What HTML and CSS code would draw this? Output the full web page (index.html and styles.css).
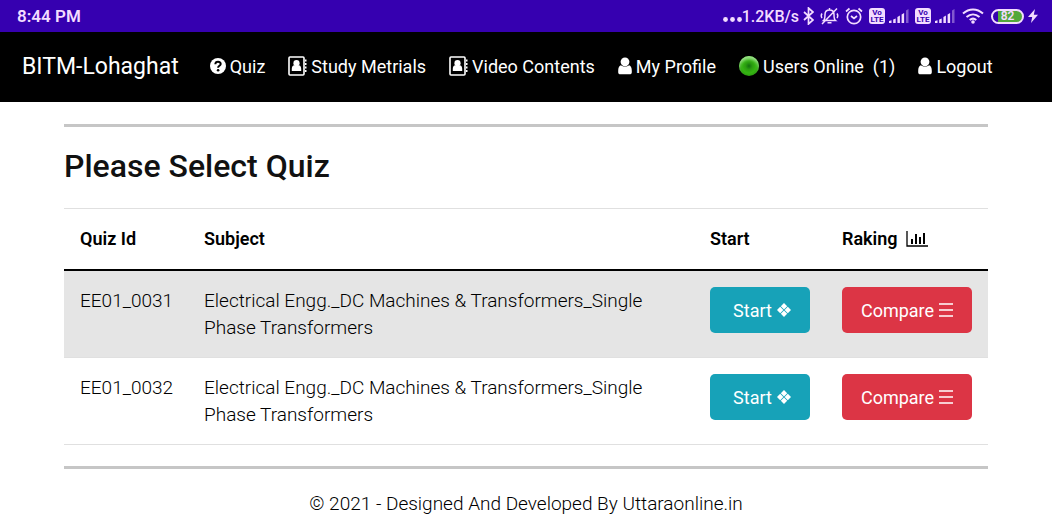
FILE: index.html
```
<!DOCTYPE html>
<html lang="en">

<head>
    <meta charset="UTF-8">
    <meta name="viewport" content="width=device-width, initial-scale=1.0">
    <title>BITM-Lohaghat - Quiz</title>
    <link rel="stylesheet" href="styles.css">
</head>

<body>
    <!-- Shared icons -->
    <svg class="icon-defs" width="0" height="0" aria-hidden="true">
        <symbol id="book" viewBox="0 0 19 20">
            <rect x="1" y="1" width="15" height="18" rx="1" fill="none" stroke="currentColor" stroke-width="1.6"/>
            <path d="M17 4.5h1.5M17 8h1.5M17 11.5h1.5M17 15h1.5" stroke="currentColor" stroke-width="2"/>
            <circle cx="8.5" cy="7.2" r="3.1" fill="currentColor"/>
            <path d="M3.800 15v-2.200c0-2 1-3.400 2.400-3.600c1.300 1 3.300 1 4.600 0c1.400.2 2.400 1.600 2.400 3.600V15z" fill="currentColor"/>
        </symbol>
        <symbol id="user" viewBox="0 0 14 18">
            <circle cx="7" cy="4.800" r="4.400" fill="currentColor"/>
            <path d="M2.800 8.200C1 8.700.2 10.800.2 14v1.200C.2 16.600 1 17.300 2.300 17.300h9.400c1.300 0 2.100-.7 2.100-2.100V14c0-3.200-.8-5.300-2.600-5.800c-2.400 1.800-6 1.800-8.400 0z" fill="currentColor"/>
        </symbol>
        <symbol id="signal" viewBox="0 0 20 14">
            <path d="M0 14v-2l2.500-.8V14zM4.200 14v-3.400L6.700 9.600V14zM8.400 14V8l2.500-1.400V14z" fill="currentColor"/>
            <path d="M12.600 14V5.500L15.100 4v10z" fill="currentColor"/>
            <path d="M17 14V1.500L19.500 0v14z" fill="currentColor" opacity=".4"/>
        </symbol>
        <symbol id="four" viewBox="0 0 14 14">
            <path d="M7 0l3.200 3.200L7 6.400L3.800 3.200zM7 7.600l3.200 3.200L7 14l-3.200-3.200zM3.200 3.800L6.400 7l-3.200 3.200L0 7zM10.800 3.800L14 7l-3.200 3.200L7.600 7z" fill="currentColor"/>
        </symbol>
        <symbol id="bars" viewBox="0 0 14 14">
            <path d="M0 1h14M0 7h14M0 13h14" stroke="currentColor" stroke-width="1.5"/>
        </symbol>
    </svg>

    <!-- Phone status bar -->
    <div class="status-bar">
        <span>8:44 PM</span>
        <div class="status-icons">
            <div class="speed">
                <svg width="19" height="5" viewBox="0 0 19 5"><g fill="currentColor"><circle cx="2.500" cy="2.500" r="2.400"/><circle cx="9.500" cy="2.500" r="2.400"/><circle cx="16.500" cy="2.500" r="2.400"/></g></svg>
                <span>1.2KB/s</span>
            </div>
            <svg width="11" height="18" viewBox="0 0 11 18"><path d="M1 5l9 8l-4.500 4V1L10 5l-9 8" fill="none" stroke="currentColor" stroke-width="1.700"/></svg>
            <svg class="bell" width="19" height="18" viewBox="0 0 19 18"><path d="M3.500 13.500h12c-1.500-1.200-1.500-3-1.500-6c0-2.800-1.700-4.500-4.500-4.500S5 4.700 5 7.500c0 3 0 4.800-1.500 6zM9.500 3V1M7.500 15.800h4M2 17L17 1.500M2 6.500c-1 1.500-1 3 0 4.500M17 6.500c1 1.500 1 3 0 4.500" fill="none" stroke="currentColor" stroke-width="1.500"/></svg>
            <svg class="alarm" width="18" height="18" viewBox="0 0 18 18"><circle cx="9" cy="10" r="6.700" fill="none" stroke="currentColor" stroke-width="1.700"/><path d="M1 4.500L4.500 1.500M17 4.500L13.500 1.500M6 9l3 2.500L12 9" fill="none" stroke="currentColor" stroke-width="1.700"/></svg>
            <span class="volte"><span>Vo</span><span>LTE</span></span>
            <svg class="signal" width="20" height="14"><use href="#signal"/></svg>
            <span class="volte"><span>Vo</span><span>LTE</span></span>
            <svg class="signal" width="20" height="14"><use href="#signal"/></svg>
            <svg class="wifi" width="22" height="16" viewBox="0 0 22 16"><g fill="none" stroke="currentColor" stroke-width="2"><path d="M1 5.500c6-5.400 14-5.400 20 0M4.500 9c4-3.500 9-3.500 13 0M7.700 12c2.200-1.800 4.400-1.800 6.600 0"/></g><circle cx="11" cy="14" r="1.800" fill="currentColor"/></svg>
            <span class="battery"><span>82</span></span>
            <svg width="10" height="14" viewBox="0 0 10 14"><path d="M7 0L0 8h4.200L3 14l7-8.200H5.800z" fill="currentColor"/></svg>
        </div>
    </div>

    <!-- Navbar -->
    <nav class="navbar">
        <a class="brand" href="#">BITM-Lohaghat</a>
        <a class="nav-link" href="#">
            <svg width="16" height="16" viewBox="0 0 16 16"><circle cx="8" cy="8" r="8" fill="currentColor"/><path d="M5.300 6.200c.2-3.200 5.400-3.100 5.400-.2c0 1.800-2.600 1.700-2.600 3.700" fill="none" stroke="#000" stroke-width="2"/><circle cx="8.100" cy="12.200" r="1.300" fill="#000"/></svg>
            Quiz
        </a>
        <a class="nav-link" href="#"><svg width="19" height="20"><use href="#book"/></svg>Study Metrials</a>
        <a class="nav-link" href="#"><svg width="19" height="20"><use href="#book"/></svg>Video Contents</a>
        <a class="nav-link" href="#"><svg width="14" height="18"><use href="#user"/></svg>My Profile</a>
        <a class="nav-link" href="#"><span class="online-dot"></span>Users Online&nbsp; (1)</a>
        <a class="nav-link" href="#"><svg width="14" height="18"><use href="#user"/></svg>Logout</a>
    </nav>

    <main class="container">
        <hr>
        <h1>Please Select Quiz</h1>

        <table class="quiz-table">
            <thead>
                <tr>
                    <th class="col-id">Quiz Id</th>
                    <th>Subject</th>
                    <th class="col-start">Start</th>
                    <th class="col-rank">Raking
                        <svg class="chart" width="22" height="16" viewBox="0 0 22 16"><path d="M1 0v15h21" fill="none" stroke="currentColor" stroke-width="1.300"/><path d="M5 13V8h2v5zM9 13V3h2v10zM13 13V6h2v7zM17 13V2h2v11z" fill="currentColor"/></svg>
                    </th>
                </tr>
            </thead>
            <tbody>
                <tr>
                    <td>EE01_0031</td>
                    <td>Electrical Engg._DC Machines &amp; Transformers_Single Phase Transformers</td>
                    <td><button class="btn btn-start">Start <svg width="14" height="14"><use href="#four"/></svg></button></td>
                    <td><button class="btn btn-compare">Compare <svg width="14" height="14"><use href="#bars"/></svg></button></td>
                </tr>
                <tr>
                    <td>EE01_0032</td>
                    <td>Electrical Engg._DC Machines &amp; Transformers_Single Phase Transformers</td>
                    <td><button class="btn btn-start">Start <svg width="14" height="14"><use href="#four"/></svg></button></td>
                    <td><button class="btn btn-compare">Compare <svg width="14" height="14"><use href="#bars"/></svg></button></td>
                </tr>
            </tbody>
        </table>

        <hr>
        <footer>&copy; 2021 - Designed And Developed By Uttaraonline.in</footer>
    </main>
</body>

</html>
```

FILE: styles.css
```
* {
    box-sizing: border-box;
}

body {
    margin: 0;
    font-family: Roboto, "Liberation Sans", sans-serif;
    font-size: 18px;
    line-height: 27px;
    color: #212529;
    background-color: #fff;
}

.icon-defs {
    display: none;
}

/* Status bar */
.status-bar {
    display: flex;
    align-items: center;
    justify-content: space-between;
    height: 32px;
    padding: 0 14px 0 17px;
    background-color: #3600b0;
    color: #f3dcff;
    font-size: 17px;
    font-weight: 600;
}

.status-icons {
    display: flex;
    align-items: center;
    gap: 4px;
}

.speed {
    display: flex;
    align-items: baseline;
    font-size: 16px;
    font-weight: 500;
}

.bell,
.alarm,
.volte {
    margin-left: 2px;
}

.volte {
    display: flex;
    flex-direction: column;
    align-items: center;
    justify-content: center;
    width: 16px;
    height: 16px;
    border-radius: 3px;
    background-color: #f3dcff;
    color: #3600b0;
    font-size: 8px;
    font-weight: 700;
    line-height: 7px;
}

.wifi,
.battery {
    margin-left: 3px;
}

.battery {
    display: flex;
    align-items: center;
    justify-content: center;
    width: 33px;
    height: 15px;
    border: 2px solid #f3dcff;
    border-radius: 8px;
    background: linear-gradient(to right, #3600b0 5px, #52a83a 5px);
    font-size: 12px;
    line-height: 12px;
}

/* Navbar */
.navbar {
    display: flex;
    align-items: center;
    gap: 23px;
    height: 70px;
    padding: 0 22px 2px;
    background-color: #000;
}

.navbar a {
    color: #fff;
    text-decoration: none;
    white-space: nowrap;
}

.brand {
    margin-right: 8px;
    font-size: 23px;
}

.nav-link {
    display: flex;
    align-items: center;
    gap: 4px;
}

.online-dot {
    width: 20px;
    height: 20px;
    border-radius: 50%;
    background: radial-gradient(circle, #14700f 0, #2b9e10 25%, #35b512 50%, #1d7a0b 100%);
    box-shadow: inset 0 3px 3px #9be08a;
}

/* Content */
.container {
    padding: 22px 64px 8px;
}

hr {
    height: 3px;
    margin: 0;
    border: none;
    background-color: #c6c6c6;
}

h1 {
    margin: 20px 0 22px;
    font-size: 32px;
    font-weight: 500;
    line-height: 39px;
    color: #111;
}

.quiz-table {
    width: 100%;
    margin-bottom: 21px;
    border-collapse: collapse;
    table-layout: fixed;
    border-bottom: 1px solid #e0e0e0;
    color: #111;
}

.quiz-table th,
.quiz-table td {
    padding: 16px;
    border-top: 1px solid #e0e0e0;
    text-align: left;
    vertical-align: top;
}

.quiz-table th {
    padding-bottom: 17px;
    border-bottom: 2px solid #000;
    font-weight: 600;
    color: #000;
}

.quiz-table tbody tr:nth-child(odd) {
    background-color: #e5e5e5;
}

.quiz-table td,
footer {
    font-size: 19px;
    font-weight: 300;
    color: #000;
}

.col-id {
    width: 124px;
}

.col-start {
    width: 132px;
}

.col-rank {
    width: 162px;
}

.chart {
    margin-left: 4px;
    vertical-align: -2px;
}

/* Buttons */
.btn {
    display: flex;
    align-items: center;
    justify-content: center;
    gap: 5px;
    width: 100%;
    height: 46px;
    padding: 0;
    border: none;
    border-radius: 5px;
    color: #fff;
    font-family: inherit;
    font-size: 18px;
    cursor: pointer;
}

.quiz-table td:nth-child(n+3) {
    padding-bottom: 0;
}

.btn-start {
    padding-left: 4px;
    background-color: #17a2b8;
}

.btn-compare {
    background-color: #dc3545;
}

footer {
    padding-top: 21px;
    text-align: center;
}
```
